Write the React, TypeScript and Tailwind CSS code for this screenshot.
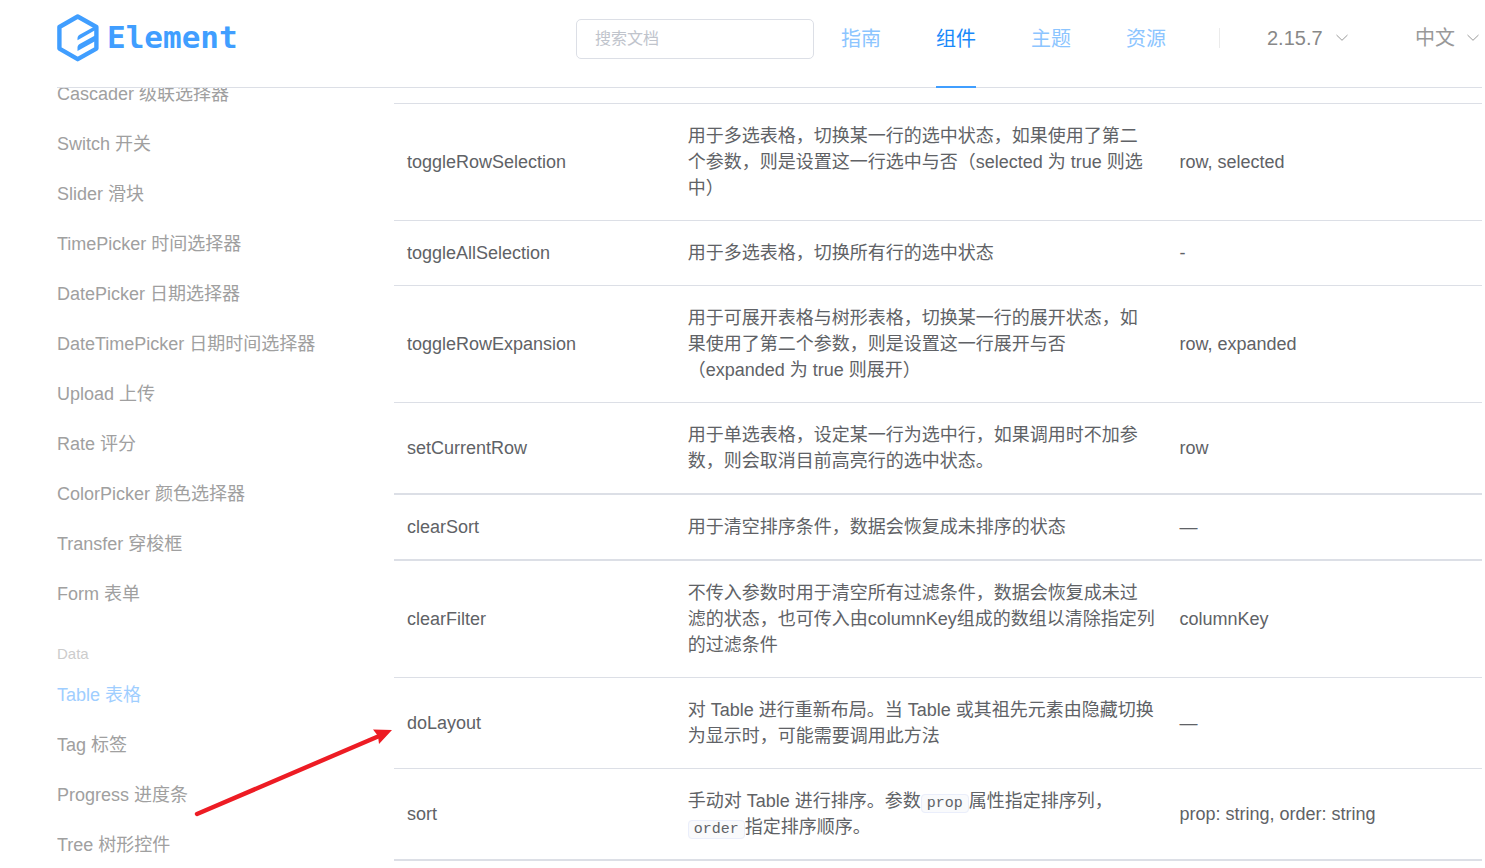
import { ReactNode } from 'react';

const components = [
  'Cascader 级联选择器',
  'Switch 开关',
  'Slider 滑块',
  'TimePicker 时间选择器',
  'DatePicker 日期选择器',
  'DateTimePicker 日期时间选择器',
  'Upload 上传',
  'Rate 评分',
  'ColorPicker 颜色选择器',
  'Transfer 穿梭框',
  'Form 表单',
];

const dataComponents = [
  'Table 表格',
  'Tag 标签',
  'Progress 进度条',
  'Tree 树形控件',
];

const navItems = ['指南', '组件', '主题', '资源'];

type Method = {
  name: string;
  desc: ReactNode;
  params: string;
  thick?: boolean;
};

const methods: Method[] = [
  {
    name: 'toggleRowSelection',
    desc: (
      <>
        用于多选表格，切换某一行的选中状态，如果使用了第二
        <br />
        个参数，则是设置这一行选中与否（selected 为 true 则选
        <br />
        中）
      </>
    ),
    params: 'row, selected',
  },
  {
    name: 'toggleAllSelection',
    desc: '用于多选表格，切换所有行的选中状态',
    params: '-',
  },
  {
    name: 'toggleRowExpansion',
    desc: (
      <>
        用于可展开表格与树形表格，切换某一行的展开状态，如
        <br />
        果使用了第二个参数，则是设置这一行展开与否
        <br />
        （expanded 为 true 则展开）
      </>
    ),
    params: 'row, expanded',
  },
  {
    name: 'setCurrentRow',
    desc: (
      <>
        用于单选表格，设定某一行为选中行，如果调用时不加参
        <br />
        数，则会取消目前高亮行的选中状态。
      </>
    ),
    params: 'row',
    thick: true,
  },
  {
    name: 'clearSort',
    desc: '用于清空排序条件，数据会恢复成未排序的状态',
    params: '—',
    thick: true,
  },
  {
    name: 'clearFilter',
    desc: (
      <>
        不传入参数时用于清空所有过滤条件，数据会恢复成未过
        <br />
        滤的状态，也可传入由columnKey组成的数组以清除指定列
        <br />
        的过滤条件
      </>
    ),
    params: 'columnKey',
  },
  {
    name: 'doLayout',
    desc: (
      <>
        对 Table 进行重新布局。当 Table 或其祖先元素由隐藏切换
        <br />
        为显示时，可能需要调用此方法
      </>
    ),
    params: '—',
  },
  {
    name: 'sort',
    desc: (
      <>
        手动对 Table 进行排序。参数<Code>prop</Code>属性指定排序列，
        <br />
        <Code>order</Code>指定排序顺序。
      </>
    ),
    params: 'prop: string, order: string',
    thick: true,
  },
];

function Code({ children }: { children: ReactNode }) {
  return (
    <code className="rounded border border-[#eaeefb] bg-[#f9fafc] px-[5px] font-['Liberation_Mono','Noto_Sans_CJK_SC',monospace] text-[15px] leading-4">
      {children}
    </code>
  );
}

function Chevron() {
  return (
    <svg
      className="pointer-events-none absolute top-1/2 right-[3px] h-3 w-3 -translate-y-1/2"
      viewBox="0 0 12 12"
      fill="none"
      stroke="#999"
      strokeWidth="1"
    >
      <path d="M0.5 3 6 8.3 11.5 3" />
    </svg>
  );
}

function Logo() {
  return (
    <a href="#" className="flex h-[76px] items-center gap-2 text-[#409eff]">
      <svg width="42" height="48" viewBox="0 0 42 48" fill="currentColor">
        <path
          d="M20.7 2.5 39.4 13V34.6L20.7 45.2 2.4 34.6V13Z"
          fill="none"
          stroke="currentColor"
          strokeWidth="4.4"
          strokeLinejoin="round"
        />
        <path d="M38 12.3 23 20.6C21.2 21.7 20.5 22.8 20.5 24.6V26.2L38 16.2Z" />
        <path d="M38 21.5 23 29.8C21.2 30.9 20.5 32 20.5 33.8V37L38 27.3Z" />
      </svg>
      <span className="font-['DejaVu_Sans_Mono',monospace] text-[31px] font-bold">
        Element
      </span>
    </a>
  );
}

function Header() {
  return (
    <header className="flex h-[88px] shrink-0 items-start border-b border-[#dcdfe6] text-xl">
      <Logo />
      <div className="ml-auto flex h-[78px] items-center">
        <input
          type="text"
          aria-label="搜索文档"
          placeholder="搜索文档"
          className="h-10 w-[238px] rounded-[5px] border border-[#dcdfe6] px-[18px] text-base outline-none placeholder:text-[#c0c4cc]"
        />
      </div>
      <nav className="ml-[27px] flex gap-[55px]">
        {navItems.map((item) => (
          <a
            key={item}
            href="#"
            className={
              item === '组件'
                ? 'flex h-[88px] items-center border-b-2 border-[#409eff] pb-2 text-[#1989fa]'
                : 'flex h-[88px] items-center pb-[10px] text-[#8cc5ff]'
            }
          >
            {item}
          </a>
        ))}
      </nav>
      <div className="flex h-[76px] items-center">
        <div className="ml-[53px] h-5 w-px bg-[#ebebeb]" />
        <div className="relative ml-[47px]">
          <select
            aria-label="版本"
            className="w-[84px] appearance-none bg-transparent text-[#888] outline-none"
          >
            <option>2.15.7</option>
          </select>
          <Chevron />
        </div>
        <div className="relative ml-16">
          <select
            aria-label="语言"
            className="w-[67px] appearance-none bg-transparent text-[#999] outline-none"
          >
            <option>中文</option>
          </select>
          <Chevron />
        </div>
      </div>
    </header>
  );
}

function SideNav() {
  return (
    <aside className="w-[337px] shrink-0 text-lg text-[#a0a0a0]">
      <ul className="-mt-[19px]">
        {components.map((name) => (
          <li key={name}>
            <a href="#" className="flex h-[50px] items-center">
              {name}
            </a>
          </li>
        ))}
      </ul>
      <h3 className="pt-[19px] text-[15px] leading-8 text-[#ccc]">Data</h3>
      <ul>
        {dataComponents.map((name) => (
          <li key={name}>
            <a
              href="#"
              className={
                name.startsWith('Table')
                  ? 'flex h-[50px] items-center text-[#9fceff]'
                  : 'flex h-[50px] items-center'
              }
            >
              {name}
            </a>
          </li>
        ))}
      </ul>
    </aside>
  );
}

function MethodsTable() {
  return (
    <table className="w-full table-fixed border-separate border-spacing-0 border-t border-[#dcdfe6] text-left text-lg leading-[26px] text-[#606266]">
      <colgroup>
        <col className="w-[25.8%]" />
        <col className="w-[45.2%]" />
        <col />
      </colgroup>
      <tbody>
        {methods.map((m) => {
          const cell = m.thick
            ? 'border-b-2 border-[#dcdfe6] px-[13px] py-[19px] whitespace-nowrap'
            : 'border-b border-[#dcdfe6] px-[13px] py-[19px] whitespace-nowrap';
          return (
            <tr key={m.name}>
              <td className={cell}>{m.name}</td>
              <td className={cell}>{m.desc}</td>
              <td className={cell}>{m.params}</td>
            </tr>
          );
        })}
      </tbody>
    </table>
  );
}

// red pointer drawn over the page, aimed at doLayout
function Arrow() {
  return (
    <svg
      className="pointer-events-none absolute top-[728px] left-[194px]"
      width="200"
      height="90"
      viewBox="0 0 200 90"
    >
      <path
        d="M3 86 184 8.5"
        stroke="#ed1c24"
        strokeWidth="4.4"
        strokeLinecap="round"
      />
      <path d="M198 2 179 1.5 184 8 185 16Z" fill="#ed1c24" />
    </svg>
  );
}

export default function App() {
  return (
    <div className="relative flex h-screen flex-col overflow-hidden bg-white pr-[3px] pl-[57px] font-['Liberation_Sans','Noto_Sans_CJK_SC',sans-serif]">
      <Header />
      <div className="flex min-h-0 flex-1 overflow-hidden">
        <SideNav />
        <main className="min-w-0 flex-1 pt-[15px]">
          <MethodsTable />
        </main>
      </div>
      <Arrow />
    </div>
  );
}
